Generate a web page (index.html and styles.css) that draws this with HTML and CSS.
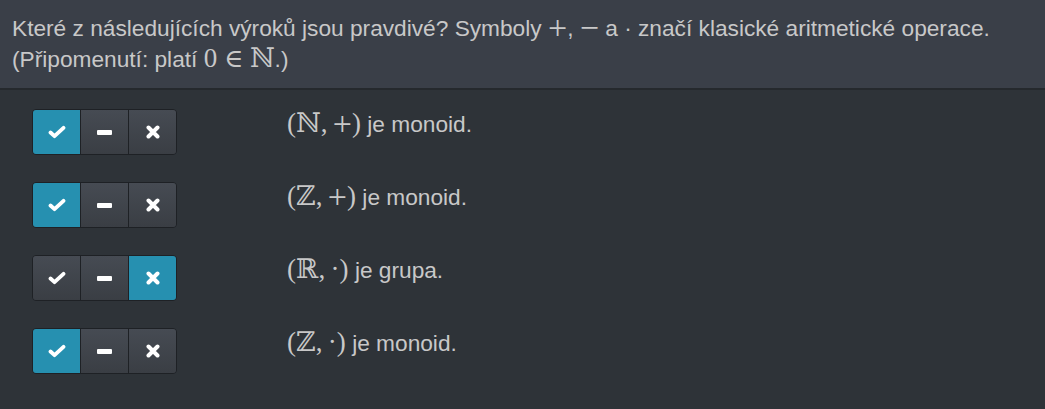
FILE: index.html
```
<!DOCTYPE html>
<html lang="cs">
<head>
<meta charset="utf-8">
<link rel="stylesheet" href="styles.css">
</head>
<body>
<div class="header">
  Které z následujících výroků jsou pravdivé? Symboly <span class="m op">+</span>, <span class="m op">−</span> a · značí klasické aritmetické operace.<br>
  (Připomenutí: platí <span class="m">0 <span class="rel">∈</span> ℕ</span>.)
</div>
<div class="list">
  <div class="row">
    <div class="group">
      <div class="btn on"><svg viewBox="0 0 18 14" class="ic-check"><path d="M2.5 7.5 L6.5 11.2 L15.5 2.8" fill="none" stroke="#fff" stroke-width="3.8" stroke-linecap="round" stroke-linejoin="round"/></svg></div>
      <div class="btn"><svg viewBox="0 0 15 5" class="ic-dash"><rect x="0" y="0" width="15" height="5" rx="1" fill="#fff"/></svg></div>
      <div class="btn"><svg viewBox="0 0 14 14" class="ic-x"><path d="M2.5 2.5 L11.5 11.5 M11.5 2.5 L2.5 11.5" stroke="#fff" stroke-width="4" stroke-linecap="round"/></svg></div>
    </div>
    <div class="stmt"><span class="m">(ℕ,&thinsp;<span class="op">+</span>)</span> je monoid.</div>
  </div>
  <div class="row">
    <div class="group">
      <div class="btn on"><svg viewBox="0 0 18 14" class="ic-check"><path d="M2.5 7.5 L6.5 11.2 L15.5 2.8" fill="none" stroke="#fff" stroke-width="3.8" stroke-linecap="round" stroke-linejoin="round"/></svg></div>
      <div class="btn"><svg viewBox="0 0 15 5" class="ic-dash"><rect x="0" y="0" width="15" height="5" rx="1" fill="#fff"/></svg></div>
      <div class="btn"><svg viewBox="0 0 14 14" class="ic-x"><path d="M2.5 2.5 L11.5 11.5 M11.5 2.5 L2.5 11.5" stroke="#fff" stroke-width="4" stroke-linecap="round"/></svg></div>
    </div>
    <div class="stmt"><span class="m">(ℤ,&thinsp;<span class="op">+</span>)</span> je monoid.</div>
  </div>
  <div class="row">
    <div class="group">
      <div class="btn"><svg viewBox="0 0 18 14" class="ic-check"><path d="M2.5 7.5 L6.5 11.2 L15.5 2.8" fill="none" stroke="#fff" stroke-width="3.8" stroke-linecap="round" stroke-linejoin="round"/></svg></div>
      <div class="btn"><svg viewBox="0 0 15 5" class="ic-dash"><rect x="0" y="0" width="15" height="5" rx="1" fill="#fff"/></svg></div>
      <div class="btn on"><svg viewBox="0 0 14 14" class="ic-x"><path d="M2.5 2.5 L11.5 11.5 M11.5 2.5 L2.5 11.5" stroke="#fff" stroke-width="4" stroke-linecap="round"/></svg></div>
    </div>
    <div class="stmt"><span class="m">(ℝ,&thinsp;·)</span> je grupa.</div>
  </div>
  <div class="row">
    <div class="group">
      <div class="btn on"><svg viewBox="0 0 18 14" class="ic-check"><path d="M2.5 7.5 L6.5 11.2 L15.5 2.8" fill="none" stroke="#fff" stroke-width="3.8" stroke-linecap="round" stroke-linejoin="round"/></svg></div>
      <div class="btn"><svg viewBox="0 0 15 5" class="ic-dash"><rect x="0" y="0" width="15" height="5" rx="1" fill="#fff"/></svg></div>
      <div class="btn"><svg viewBox="0 0 14 14" class="ic-x"><path d="M2.5 2.5 L11.5 11.5 M11.5 2.5 L2.5 11.5" stroke="#fff" stroke-width="4" stroke-linecap="round"/></svg></div>
    </div>
    <div class="stmt"><span class="m">(ℤ,&thinsp;·)</span> je monoid.</div>
  </div>
</div>
</body>
</html>
```
FILE: styles.css
```
html, body {
  margin: 0;
  padding: 0;
  background: #2e3338;
  height: 100%;
}
body {
  font-family: "Liberation Sans", Arial, sans-serif;
  color: #c8c8c8;
  font-size: 22.7px;
}
.header {
  background: #3a3f48;
  padding: 13px 12px 0 12px;
  line-height: 31px;
  height: 75px;
  border-bottom: 2px solid #25292d;
}
.m {
  font-family: "Liberation Serif", "DejaVu Serif", serif;
  font-size: 27px;
  line-height: 1;
}
.op {
  font-size: 34px;
  font-weight: 300;
  line-height: 0;
  vertical-align: -3px;
}
.rel {
  font-size: 26px;
}
.list {
  padding: 19px 0 0 32px;
  display: flex;
  flex-direction: column;
  gap: 27px;
}
.row {
  display: flex;
  align-items: flex-start;
}
.group {
  display: flex;
  width: 145px;
  height: 46px;
  border: 1px solid #1e2125;
  border-radius: 4px;
  overflow: hidden;
  box-sizing: border-box;
  flex-shrink: 0;
}
.btn {
  flex: 1;
  display: flex;
  align-items: center;
  justify-content: center;
  background: linear-gradient(#464b53, #3a3e44);
  border-left: 1px solid #1e2125;
}
.btn:first-child {
  border-left: none;
}
.btn.on {
  background: #2690b0;
}
.ic-check {
  width: 18px;
  height: 14px;
}
.ic-dash {
  width: 15px;
  height: 5px;
}
.ic-x {
  width: 14px;
  height: 14px;
}
.stmt {
  margin-left: 110px;
  padding-top: 1px;
  line-height: 28px;
}
```
